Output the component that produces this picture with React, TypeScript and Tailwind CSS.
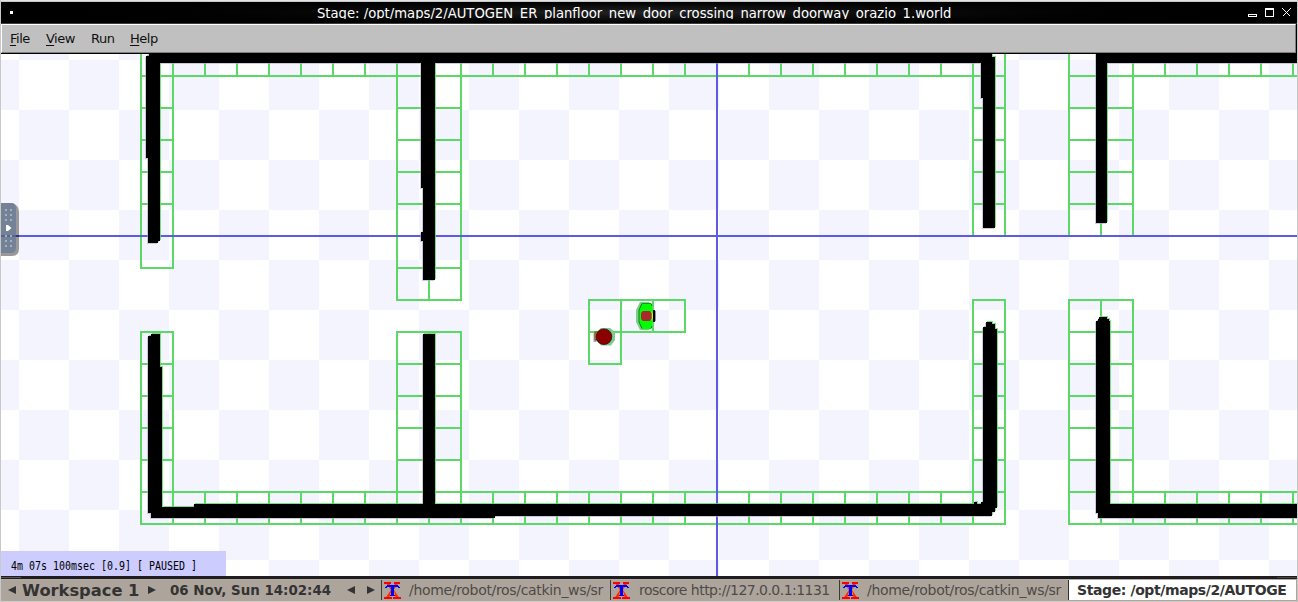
import React from "react";

type Block = [number, number, number, number];

const CELL = 32;

// Ranges of occupied quadtree cells: x0, y0, x1, y1
const occupied: Block[] = [
  [141, 44, 1005, 76],
  [141, 76, 173, 268],
  [397, 76, 461, 300],
  [973, 76, 1005, 236],
  [1069, 44, 1325, 76],
  [1069, 76, 1133, 236],
  [141, 332, 173, 492],
  [397, 332, 461, 492],
  [973, 300, 1005, 492],
  [1069, 300, 1133, 492],
  [141, 492, 1005, 524],
  [1069, 492, 1325, 524],
  [589, 300, 685, 332],
  [589, 332, 621, 364],
];

function cellsPath(blocks: Block[]): string {
  let d = "";
  for (const [x0, y0, x1, y1] of blocks) {
    for (let x = x0; x < x1; x += CELL) {
      for (let y = y0; y < y1; y += CELL) {
        d += `M${x} ${y}h${CELL}v${CELL}h-${CELL}z`;
      }
    }
  }
  return d;
}

const walls = [
  "M149 53H992V57H995V228H983V98H981V63H435V280H423V241H421V232H423V188H421V63H160V241H158V243H148V158H146V56H149Z",
  "M1096 53H1300V63H1107V223H1096Z",
  "M151 334H160V367H162V507H194V504H423V334H435V504H974V502H977V504H981V502H983V327H986V322H992V324H995V329H997V508H995V512H992V516H495V518H151V513H148V336H151Z",
  "M1099 317H1107V319H1109V321H1110V504H1300V518H1098V513H1096V321H1098V319H1099Z",
].join("");

function WorldView() {
  return (
    <svg className="block h-[522px] w-[1296px] shrink-0" viewBox="1 54 1296 522" shapeRendering="crispEdges">
      <defs>
        <pattern id="checker" x="19" y="60" width="100" height="100" patternUnits="userSpaceOnUse">
          <rect width="100" height="100" fill="#ffffff" />
          <rect x="50" width="50" height="50" fill="#f4f4ff" />
          <rect y="50" width="50" height="50" fill="#f4f4ff" />
        </pattern>
      </defs>
      <rect x="1" y="54" width="1296" height="522" fill="url(#checker)" />
      <path d={cellsPath(occupied)} fill="none" stroke="#5bd866" strokeWidth="2" />
      <rect x="1" y="235" width="1296" height="2" fill="#5b5be3" />
      <rect x="716" y="54" width="2" height="522" fill="#5b5be3" />
      <path d={walls} fill="#5bd866" fillOpacity="0.8" transform="translate(1 -1)" />
      <path d={walls} fill="#aaaac4" fillOpacity="0.6" transform="translate(-1 1)" />
      <path d={walls} fill="#000000" />

      <g shapeRendering="auto">
        <path d="M640 302h9l4 7v14l-4 7h-9l-4-8v-12z" fill="#7ccc8b" />
        <path d="M642 303h9l3 6v14l-3 6h-9l-3-7v-12z" fill="#00ff00" />
        <path d="M642 303.5l-3 6.5v12l3 6.5M651 303.5l2.5 5.5M651 328.5l2.5-5.5" fill="none" stroke="#187a20" strokeWidth="1" />
        <path d="M642 303.5h9" stroke="#109818" />
        <path d="M653 303v7M653 322v8" stroke="#5bd866" strokeWidth="2" />
        <rect x="653" y="310" width="2" height="12" fill="#000000" />
        <path d="M655.5 311v10" stroke="#9a8aa8" />
        <path d="M651 311.5l1.500 2v5l-1.500 2" fill="none" stroke="#d8ee40" />
        <path d="M643 311h7l1.500 2v6l-1.500 2h-7l-2-2v-6z" fill="#a92a2c" />

        <path d="M601 328h9l5 4v8l-4 5.500h-10l-5-5.500v-8z" fill="#7ccc8b" />
        <rect x="593.5" y="333" width="3" height="9" fill="#aaaac4" />
        <rect x="595" y="332" width="3" height="8" fill="#dc9c00" stroke="#4b3a10" strokeWidth="0.8" />
        <circle cx="604" cy="336.7" r="7.8" fill="#8b0000" stroke="#360c0c" strokeWidth="0.8" />
      </g>

      <g shapeRendering="auto">
        <path d="M1 203h12q6 3 6 9v37q0 7-7 7h-11z" fill="#999999" />
        <path d="M1 203h10q5 0 5 6v38q0 6-5 6h-10z" fill="#748297" />
        <rect x="1" y="235" width="15" height="2" fill="#5a6292" />
        <rect x="16" y="235" width="3" height="2" fill="#36366f" />
        <g fill="#a5afbd">
          {[209, 214, 219, 235, 240, 245].map((y) => (
            <React.Fragment key={y}>
              <rect x="5" y={y} width="2" height="2" />
              <rect x="10" y={y} width="2" height="2" />
            </React.Fragment>
          ))}
        </g>
        <path d="M6 225h2l3.500 3-3.500 3h-2z" fill="#ffffff" />
      </g>
    </svg>
  );
}

function XTermIcon() {
  return (
    <svg className="block h-[17px] w-[17px] shrink-0" viewBox="0 0 17 17">
      <path d="M3.5 1L14 16M13 1L3 16" stroke="#ff2a00" strokeWidth="2.4" />
      <path d="M6.500 11L8.500 8.500L11 11V13H6z" fill="#f47a38" />
      <g shapeRendering="crispEdges">
        <path d="M0 0h7v2h-7zM10 0h6v2h-6zM0 15h8v2h-8zM9 15h8v2h-8z" fill="#ff0000" />
        <path d="M3 3h11v1h1v1h1v1h-2v-1h-4v8h1v1h-5v-1h1v-8h-4v1h-2v-1h1v-1h1z" fill="#0000ff" />
      </g>
    </svg>
  );
}

function Arrow({ left = false }: { left?: boolean }) {
  return (
    <svg className="block h-2 w-2 shrink-0" viewBox="0 0 8 8">
      <path d={left ? "M8 0V8L0 4z" : "M0 0V8L8 4z"} fill="#333333" />
    </svg>
  );
}

function Task({ label, tight = false }: { label: string; tight?: boolean }) {
  return (
    <div className="flex h-5 w-[229px] shrink-0 items-center border-l border-[#3c3a38] pl-[2px]">
      <XTermIcon />
      <span
        className={`${tight ? "ml-[9px] tracking-[-0.53px]" : "ml-[8px] tracking-[-0.32px]"} text-[14px] leading-5 whitespace-pre text-[#4d4a47]`}
      >
        {label}
      </span>
    </div>
  );
}

const menu: { label: string; key: boolean; width: string }[] = [
  { label: "File", key: true, width: "w-[36px]" },
  { label: "View", key: true, width: "w-[44px]" },
  { label: "Run", key: false, width: "w-[40px]" },
  { label: "Help", key: true, width: "w-[40px]" },
];

export default function App() {
  return (
    <div className="flex h-[602px] w-[1298px] flex-col overflow-hidden border-x border-[#c8c8c8] bg-[#ada59c] font-['DejaVu_Sans',sans-serif]">
      <div className="h-[2px] shrink-0 border-t border-[#e4e4e4] bg-[#c4c8c8]" />
      <header className="flex h-[22px] shrink-0 border-b border-[#3c3c3c] bg-linear-to-r from-black via-[#242424] to-black">
        <div className="flex h-full w-full bg-linear-to-b from-black via-transparent to-black">
          <div className="mt-[9px] ml-[9px] h-[3px] w-[3px] bg-white" />
          <h1 className="ml-[304px] h-[17px] w-[640px] overflow-hidden pt-px text-[13.2px] leading-[22px] whitespace-pre text-white">
            Stage: /opt/maps/2/AUTOGEN_ER_planfloor_new_door_crossing_narrow_doorway_orazio_1.world
          </h1>
          <svg className="mt-[5px] ml-auto mr-[5px] block h-[11px] w-[44px]" viewBox="0 0 44 11" shapeRendering="crispEdges">
            <path d="M0 7h9v3h-9zM1 8v1h7v-1z" fill="#ffffff" fillRule="evenodd" />
            <path d="M17 1h9v9h-9zM18 3v6h7v-6z" fill="#ffffff" fillRule="evenodd" />
            <path d="M34.5 1.5l8 8M42.5 1.5l-8 8" stroke="#ffffff" strokeWidth="1" />
          </svg>
        </div>
      </header>
      <nav className="flex h-[30px] shrink-0 border-r border-b border-black">
        <div className="flex w-full border-t border-r border-b border-l border-t-white border-r-[#808080] border-b-[#808080] border-l-white bg-[#c0c0c0] pl-[8px] text-[13px] leading-[28px] tracking-[-0.5px] text-[#101010]">
          {menu.map((m) => (
            <div key={m.label} className={`${m.width} ${m.key ? "" : "pl-px"} shrink-0`}>
              {m.key ? <span className="underline underline-offset-2">{m.label[0]}</span> : m.label[0]}
              {m.label.slice(1)}
            </div>
          ))}
        </div>
      </nav>
      <main className="relative h-[522px] shrink-0">
        <WorldView />
        <div className="absolute bottom-0 left-0 h-[25px] w-[225px] bg-[#ccccff] pl-[10px]">
          <div className="origin-left scale-x-[0.83] pt-px font-['DejaVu_Sans_Mono',monospace] text-[12px] leading-[29px] whitespace-pre text-black">
            4m 07s 100msec [0.9] [ PAUSED ]
          </div>
        </div>
      </main>
      <div className="flex h-[3px] shrink-0 bg-[#1f1d20] pt-px">
        <div className="h-px w-[20px] bg-[#555555]" />
        <div className="ml-auto h-px w-[20px] bg-[#444444]" />
      </div>
      <footer className="flex h-[23px] shrink-0 items-center border-t border-b border-t-[#b3aba3] border-b-[#d0cdca] pb-px text-[#333333]">
        <div className="flex w-[380px] shrink-0 items-center pl-[7px]">
          <Arrow left />
          <span className="ml-[6px] w-[126px] pt-px text-[16.3px] leading-5 font-bold whitespace-pre">Workspace 1</span>
          <Arrow />
          <span className="ml-[14px] w-[177px] pt-px text-[13.4px] leading-5 font-bold whitespace-pre">06 Nov, Sun 14:02:44</span>
          <Arrow left />
          <div className="w-[12px]" />
          <Arrow />
        </div>
        <Task label="/home/robot/ros/catkin_ws/sr" />
        <Task label="roscore http://127.0.0.1:1131" tight />
        <Task label="/home/robot/ros/catkin_ws/sr" />
        <div className="mr-px h-5 min-w-0 flex-1 overflow-hidden border-l border-[#333333] bg-white pl-[8px] text-[14px] leading-5 font-bold tracking-[-0.4px] whitespace-pre">
          Stage: /opt/maps/2/AUTOGE
        </div>
      </footer>
    </div>
  );
}
